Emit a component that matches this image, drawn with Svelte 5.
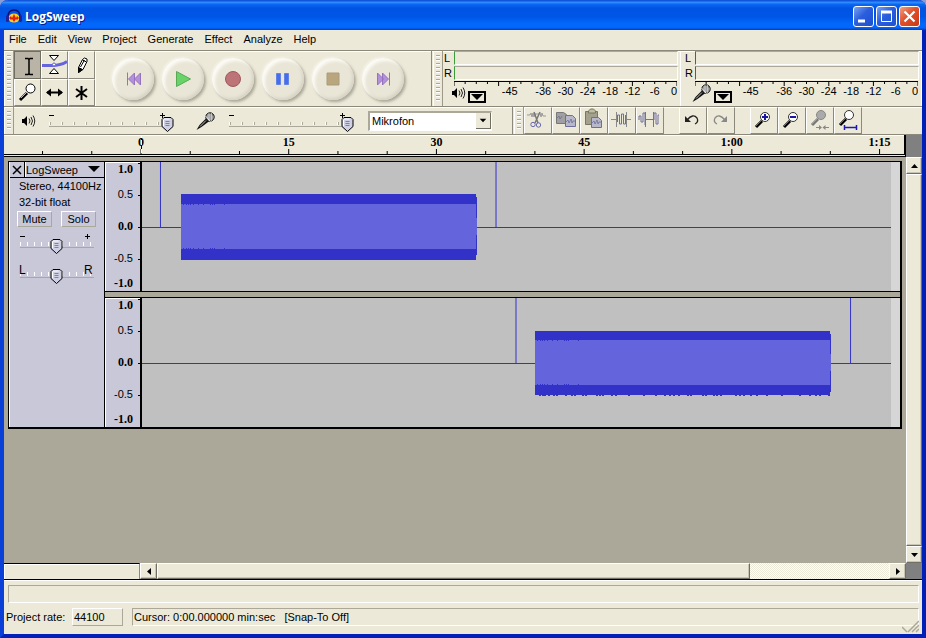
<script>
  const menus = ['File', 'Edit', 'View', 'Project', 'Generate', 'Effect', 'Analyze', 'Help'];
  const transport = [
    ['Skip to start', 'start'],
    ['Play', 'play'],
    ['Record', 'record'],
    ['Pause', 'pause'],
    ['Stop', 'stop'],
    ['Skip to end', 'end']
  ];
  const tools = ['select', 'envelope', 'draw', 'zoom', 'shift', 'multi'];
  const editGroups = [
    ['cut', 'copy', 'paste', 'trim', 'silence'],
    ['undo', 'redo'],
    ['zoomin', 'zoomout', 'fitsel', 'fitproj']
  ];
  const meterDb = [-45, -36, -30, -24, -18, -12, -6];
  const meterTicks = Array.from({ length: 21 }, (_, i) => i);
  const rulerMarks = Array.from({ length: 18 }, (_, i) => (i - 2) * 5);
  const secondPct = 1.313;
  const timeLabel = (s) => (s < 60 ? String(s) : `1:${String(s - 60).padStart(2, '0')}`);
  const vscale = [
    ['1.0', 10, true, 0],
    ['0.5', 35, false, 32],
    ['0.0', 67, true, 64],
    ['-0.5', 99, false, 96],
    ['-1.0', 124, true, 128]
  ];
  const channels = [
    { start: 39, top: 32, bottom: 98, innerTop: 42, innerBottom: 87, spikes: [18, 354], ragged: false },
    { start: 394, top: 33, bottom: 97, innerTop: 42, innerBottom: 87, spikes: [374, 709], ragged: true }
  ];
  const nicks = [2, 5, 7, 9, 12, 17, 22, 29, 31, 33, 43];
  const rag = [4, 7, 9, 13, 18, 21, 30, 36, 39, 47, 50, 61, 64, 67, 76, 80, 93, 108, 120, 129, 134, 138, 143, 152, 155, 167, 170, 178, 181, 185, 200, 204, 208, 215, 221, 231, 246, 264, 274, 280, 284, 293];
  let rate = $state('44100');
</script>

{#snippet thumb(x, y)}
  <g transform={`translate(${x} ${y})`}>
    <path d="M-3.500.5h7l2 2v7l-5.500 5-5.500-5v-7z" fill="#d0d0e4" stroke="#000" />
    <path d="M-4 9v-6l1-1h5" fill="none" stroke="#fff" />
    <path d="M-2 4.500h4M-2 6.500h4M-2 8.500h4" stroke="#8080b0" />
  </g>
{/snippet}

{#snippet speaker()}
  <svg width="15" height="14" viewBox="0 0 15 14">
    <path d="M1 5h2l3-3v10l-3-3h-2z" fill="#000" />
    <path d="M8 4.500q2 2.500 0 5M10 3q3 4 0 8M12 1.500q3.500 5.500 0 11" fill="none" stroke="#222" />
  </svg>
{/snippet}

{#snippet mic()}
  <svg class="mic" width="20" height="20" viewBox="0 0 20 20">
    <path d="M10.500 7l3 3-8 6-5 3 3-5z" fill="#111" />
    <path d="M10 9.500l-6 6" stroke="#bbb" />
    <circle cx="14" cy="6" r="4.200" fill="#888" stroke="#111" />
    <path d="M11 4h5M11 6h7M12 8h5M13 2v8M15.500 2v8" stroke="#ddd" stroke-width=".6" />
    <path d="M9.500 5l5 5.500" stroke="#eee" />
  </svg>
{/snippet}

{#snippet toolIcon(name)}
  <svg width="25" height="25" viewBox="0 0 25 25" fill="none" stroke="#000">
    {#if name === 'select'}
      <path d="M10 5.500h3l1 1 1-1h3M14 6v15M10 21.500h3l1-1 1 1h3" stroke-width="1.500" />
    {:else if name === 'envelope'}
      <path d="M0 12.500h10q9 0 15-4" stroke="#6464dc" stroke-width="3" />
      <path d="M7.500 2.500h9l-4.500 5zM7.500 20.500h9l-4.500-5z" fill="#fff" />
      <circle cx="12" cy="11.500" r="1.500" fill="#fff" stroke="#6464dc" />
    {:else if name === 'draw'}
      <path d="M9.500 14.500l4-8 2-1.500 2.500 1v2.500l-4 8-4.500 3z" fill="#fff" />
      <path d="M9.500 14.500l4 2-4 3z" fill="#000" />
      <path d="M13.500 7l4 2M11.500 14l4-7" />
    {:else if name === 'zoom'}
      <path d="M12 13l-7 7" stroke-width="3" />
      <path d="M12 12l-6 6" stroke="#bbb" />
      <circle cx="15.500" cy="8.500" r="4.500" fill="#fff" />
    {:else if name === 'shift'}
      <path d="M5 12.500h15" stroke-width="2" />
      <path d="M4 12.500l5-4v8zM21 12.500l-5-4v8z" fill="#000" stroke="none" />
    {:else}
      <path d="M12.500 6v14M7 9l11 8M7 17l11-8" stroke-width="2" />
    {/if}
  </svg>
{/snippet}

{#snippet lens(grey)}
  <path d="M11 13l-6 6" stroke={grey ? '#777' : '#000'} stroke-width="3" />
  <path d="M10 13l-5 5" stroke={grey ? '#aaa' : '#888'} stroke-width=".8" />
  <circle cx="14" cy="9" r="4.500" fill={grey ? '#aaa' : '#fff'} stroke={grey ? '#888' : '#333'} />
{/snippet}

{#snippet editIcon(name)}
  <svg width="25" height="25" viewBox="0 0 25 25" fill="none" stroke="#6e6e9e">
    {#if name === 'cut'}
      <path d="M1 8h3l1-2 1 4 1-4 1 4 1-3h4l1-1 1 4 1-4 1 3h3" stroke="#999" />
      <path d="M8 5l4 11M14 5l-5 11" stroke="#777" stroke-width="1.500" />
      <circle cx="7" cy="17.500" r="2.200" stroke="#6868b0" /><circle cx="12.500" cy="18" r="2.200" stroke="#6868b0" />
    {:else if name === 'copy'}
      <path d="M2.500 5.500h7l3 2v9h-10z" fill="#a0a0a0" stroke="#777" />
      <path d="M11.500 8.500h7l3 3v8h-10z" fill="#b8b8c8" />
      <path d="M12 15l2-2 1 3 2-4 1 4 1-2h2M3 11l2-2 1 3 2-3" stroke-width=".8" />
    {:else if name === 'paste'}
      <path d="M3.500 4.500h12v13h-12z" fill="#a3a18e" stroke="#777767" />
      <path d="M6.500 6v-2l2-2h3l2 2v2z" fill="#c0be9b" stroke="#777767" />
      <path d="M9.500 10.500h7l3 3v7h-10z" fill="#b8b8c8" />
      <path d="M10 16l2-2 1 3 2-4 1 4 1-2h2" stroke-width=".8" />
    {:else if name === 'trim'}
      <path d="M1 12.500h6M16 12.500h5M6.500 5v15M16.500 5v15" stroke="#888" />
      <path d="M7.500 15v-7h2v9h2v-10h2v10h2v-9" />
    {:else if name === 'silence'}
      <path d="M1 13v-4h2v6h2v-9h2v12M16 13v-7h2v11h2v-9h1" />
      <path d="M7 12.500h9M7.500 5v15M15.500 5v15" stroke="#777" />
    {:else if name === 'undo'}
      <path d="M6 13q6-7 10-2 2 4-2 6" stroke="#222" stroke-width="1.300" />
      <path d="M4 9v6h6z" fill="#222" stroke="none" />
    {:else if name === 'redo'}
      <path d="M16 13q-6-7-10-2-2 4 2 6" stroke="#888" stroke-width="1.300" />
      <path d="M18 9v6h-6z" fill="#888" stroke="none" />
    {:else if name === 'zoomin'}
      <g transform="translate(-1 1)">
        {@render lens(false)}
        <path d="M11 9h6M14 6v6" stroke="#1818a0" stroke-width="2" />
      </g>
    {:else if name === 'zoomout'}
      <g transform="translate(-1 1)">
        {@render lens(false)}
        <path d="M11 9h6" stroke="#1818a0" stroke-width="2" />
      </g>
    {:else if name === 'fitsel'}
      <g transform="translate(-1 -1)">{@render lens(true)}</g>
      <path d="M8 20.500h5M16 20.500h5" stroke="#888" />
      <path d="M11 18l3 2.500-3 2.500zM17.500 18l-3 2.500 3 2.500z" fill="#888" stroke="none" />
    {:else}
      <g transform="translate(-1 -1)">{@render lens(false)}</g>
      <path d="M8.500 18v5M20.500 18v5M9 20.500h11" stroke="#1818c0" stroke-width="1.500" />
    {/if}
  </svg>
{/snippet}

{#snippet levelSlider(label)}
  <div class="slider">
    <svg width="128" height="25" viewBox="0 0 128 25">
      <path d="M1 7.500h5M112 7.500h5M114.500 5v5" stroke="#000" />
      <path d="M1 18.500h119" stroke="#aca899" />
      {#each Array(10) as _, i}<path d={`M${1.5 + i * 12} 14v3`} stroke="#fff" /><path d={`M${2.5 + i * 12} 14v3`} stroke="#aca899" />{/each}
      {@render thumb(119.5, 9)}
    </svg>
    <input type="range" min="0" max="100" value="96" aria-label={label} />
  </div>
{/snippet}

{#snippet meter(kind)}
  <div class="meter">
    <div class="meter-row"><span>L</span><div class={['track-bar', kind]}></div></div>
    <div class="meter-row"><span>R</span><div class={['track-bar', kind]}></div></div>
    <div class="meter-scale">
      <svg width="100%" height="24">
        <path d="M0 0h2000" stroke="#000" stroke-width="2" />
        {#each meterTicks as i}
          <line x1={`${i * 5}%`} x2={`${i * 5}%`} y1="0" y2={i % 4 ? 3 : 5} stroke="#000" />
        {/each}
        {#each meterDb as db}
          <text x={`${((db + 60) / 60) * 100}%`} y="14" text-anchor="middle">{db}</text>
        {/each}
        <text x="100%" y="14" text-anchor="end">0</text>
      </svg>
      <div class="meter-tools">
        {#if kind === 'out'}{@render speaker()}{:else}{@render mic()}{/if}
        <button aria-label="Meter options"><svg width="18" height="12" viewBox="0 0 18 12"><rect x="1" y="1" width="16" height="10" fill="#ece9d8" stroke="#000" stroke-width="2" /><path d="M3 3h12l-6 6z" /></svg></button>
      </div>
    </div>
  </div>
{/snippet}

<div class="window">
  <header>
    <svg width="16" height="16" viewBox="0 0 16 16">
      <ellipse cx="8" cy="10" rx="5.500" ry="4.500" fill="#ffd21c" />
      <path d="M3 10l2-2 1 2 2-4 2 4 1-2 2 2-2 2-1-1-2 3-2-3-1 1z" fill="#e02010" />
      <path d="M2 9q0-7 6-7t6 7" fill="none" stroke="#10106e" stroke-width="1.500" />
      <rect x="0" y="7" width="3" height="7" rx="1.500" fill="#20209a" /><rect x="13" y="7" width="3" height="7" rx="1.500" fill="#20209a" />
    </svg>
    <h1>LogSweep</h1>
    <button aria-label="Minimize"><svg width="19" height="19" viewBox="0 0 19 19"><path d="M4 14h7" stroke="#fff" stroke-width="3" /></svg></button>
    <button aria-label="Maximize"><svg width="19" height="19" viewBox="0 0 19 19"><path d="M4.500 4v10.500h10V4" fill="none" stroke="#fff" /><path d="M4 5h11" stroke="#fff" stroke-width="3" /></svg></button>
    <button class="close" aria-label="Close"><svg width="19" height="19" viewBox="0 0 19 19"><path d="M4.500 4.500l10 10M14.500 4.500l-10 10" stroke="#fff" stroke-width="2.200" /></svg></button>
  </header>

  <nav>
    {#each menus as m}<button>{m}</button>{/each}
  </nav>

  <div class="bar top">
    <div class="grip"></div>
    <div class="tools">
      {#each tools as t}<button class:on={t === 'select'} aria-label={t}>{@render toolIcon(t)}</button>{/each}
    </div>
    <div class="transport">
      {#each transport as [label, id]}
        <button aria-label={label}>
          <svg width="20" height="20" viewBox="0 0 20 20">
            {#if id === 'start'}
              <path d="M4.500 3.500v13M11.500 4v12l-6-6zM17.500 4v12l-6-6z" fill="#b38fdc" stroke="#9674bd" />
            {:else if id === 'play'}
              <path d="M3.500 2.500l14 7.500-14 7.500z" fill="#68d468" stroke="#58a858" />
            {:else if id === 'record'}
              <circle cx="10" cy="10" r="7.500" fill="#bd7478" stroke="#a0585c" />
            {:else if id === 'pause'}
              <path d="M3.500 4.500h4v11h-4zM11.500 4.500h4v11h-4z" fill="#466cf0" stroke="#6484e4" />
            {:else if id === 'stop'}
              <path d="M4 4h12v12h-12z" fill="#b9a67e" stroke="#ac9c78" />
            {:else}
              <path d="M16.500 3.500v13M9.500 4v12l6-6zM4.500 4v12l6-6z" fill="#b38fdc" stroke="#9674bd" />
            {/if}
          </svg>
        </button>
      {/each}
    </div>
    <div class="grip"></div>
    <div class="meters">
      {@render meter('out')}
      {@render meter('in')}
    </div>
  </div>

  <div class="bar mixer">
    <div class="grip"></div>
    <div class="mix">
      {@render speaker()}
      {@render levelSlider('Output volume')}
      {@render mic()}
      {@render levelSlider('Input volume')}
      <div class="combo">
        <select aria-label="Input source"><option>Mikrofon</option></select>
        <svg width="15" height="16" viewBox="0 0 15 16"><path d="M4 6h7l-3.500 4z" /></svg>
      </div>
    </div>
    <div class="grip"></div>
    <div class="edit">
      {#each editGroups as g}
        <div>{#each g as e}<button aria-label={e}>{@render editIcon(e)}</button>{/each}</div>
      {/each}
    </div>
  </div>

  <div class="ruler-row">
    <div class="ruler">
      <svg width="100%" height="19">
        {#each rulerMarks as s}
          <line x1={`${s * secondPct}%`} x2={`${s * secondPct}%`} y1={s % 15 || s < 0 ? 16 : 14} y2="19" stroke="#000" />
          {#if s % 15 === 0 && s >= 0}<text x={`${s * secondPct}%`} y="11" text-anchor="middle">{timeLabel(s)}</text>{/if}
        {/each}
        <path d="M.5 1v17" stroke="#fff" />
        <path d="M.5 3v2M.5 10v4" stroke="#000" />
      </svg>
    </div>
    <div class="dark"></div>
  </div>

  <main>
    <div class="canvas">
      <section class="track">
        <aside>
          <div class="track-title">
            <button aria-label="Close track"><svg width="14" height="14" viewBox="0 0 14 14"><path d="M3 3l8 8M11 3l-8 8" stroke="#000" stroke-width="1.500" /></svg></button>
            <button class="name">LogSweep<svg width="12" height="7" viewBox="0 0 12 7"><path d="M0 0h12l-6 6z" /></svg></button>
          </div>
          <div class="info">Stereo, 44100Hz<br />32-bit float</div>
          <div class="ms"><button>Mute</button><button>Solo</button></div>
          {#each ['Gain', 'Pan'] as kind}
            <div class="slider">
              <svg width="80" height="30" viewBox="0 0 80 30">
                <path d="M1 20.500h74" stroke="#aca899" />
                {#each Array(11) as _, i}<path d={`M${1.5 + i * 7} 15v4`} stroke="#fff" />{/each}
                {#if kind === 'Gain'}
                  <path d="M1 9.500h5M66 9.500h5M68.500 7v5" stroke="#000" />
                {:else}
                  <text x="0" y="17" class="lr">L</text><text x="65" y="17" class="lr">R</text>
                {/if}
                {@render thumb(37.5, 12)}
              </svg>
              <input type="range" min="-100" max="100" value="0" aria-label={kind} />
            </div>
          {/each}
        </aside>
        <div class="channels">
          {#each channels as c}
            <div class="channel">
              <svg class="vscale" width="35" height="129">
                {#each vscale as [label, y, bold, tick]}
                  <text x="27" {y} text-anchor="end" class:bold>{label}</text>
                  <path d={`M32 ${tick + 0.5}h3`} stroke="#000" />
                {/each}
              </svg>
              <svg class="wave" viewBox="0 0 750 129" preserveAspectRatio="none" shape-rendering="crispEdges">
                <path d="M0 65.500h750" stroke="#3232c8" />
                {#each c.spikes as x}<path d={`M${x + 0.5} 0v66`} stroke="#3232c8" />{/each}
                <rect x={c.start} y={c.top} width="295" height={c.bottom - c.top} fill="#3232c8" />
                <rect x={c.start + 295} y={c.top + 3} width="1" height="58" fill="#3232c8" />
                <rect x={c.start} y={c.innerTop} width="295" height={c.innerBottom - c.innerTop} fill="#6464dc" />
                <rect x={c.start + 295} y="56" width="1" height="17" fill="#6464dc" />
                {#each nicks as n}
                  <rect x={c.start + n} y={c.innerTop} width="1" height="1" fill="#3232c8" />
                  <rect x={c.start + n} y={c.innerBottom - 1} width="1" height="1" fill="#3232c8" />
                {/each}
                {#if c.ragged}
                  {#each rag as n}<rect x={c.start + n} y={c.bottom} width="2" height="1" fill="#3232c8" />{/each}
                {/if}
              </svg>
              <div class="tail"></div>
            </div>
          {/each}
        </div>
      </section>
    </div>
    <div class="vscroll">
      <button aria-label="Scroll up"><svg width="7" height="4" viewBox="0 0 7 4"><path d="M0 4h7l-3.500-4z" /></svg></button>
      <div class="vthumb"></div>
      <button aria-label="Scroll down"><svg width="7" height="4" viewBox="0 0 7 4"><path d="M0 0h7l-3.500 4z" /></svg></button>
    </div>
  </main>

  <div class="hrow">
    <div class="blank"></div>
    <button aria-label="Scroll left"><svg width="4" height="7" viewBox="0 0 4 7"><path d="M4 0v7l-4-3.500z" /></svg></button>
    <div class="trough"><div class="hthumb"></div></div>
    <button aria-label="Scroll right"><svg width="4" height="7" viewBox="0 0 4 7"><path d="M0 0v7l4-3.500z" /></svg></button>
    <div class="dark"></div>
  </div>

  <footer>
    <div class="panel"></div>
    <div class="status">
      <label for="rate">Project rate:</label>
      <input id="rate" type="text" bind:value={rate} />
      <div class="panel">Cursor: 0:00.000000 min:sec &nbsp; [Snap-To Off]</div>
    </div>
    <svg class="resize" width="17" height="13" viewBox="0 0 17 13"><path d="M0 7l5 5M6 12l11-11M10 12l7-7M14 12l3-3" stroke="#aca899" stroke-width="1.500" /></svg>
  </footer>
</div>

<style>
  :global(body) { margin: 0; background: #8c9cd8; }
  .window, .window * { box-sizing: border-box; }
  .window {
    min-height: 100vh;
    display: flex;
    flex-direction: column;
    font: 11px/14px "Liberation Sans", Arial, sans-serif;
    color: #000;
    background: #ece9d8;
    border: 4px solid #0845dc;
    border-color: #0845dc #0020b8 #0020b8 #0a3fd8;
    border-top: 0;
    border-radius: 8px 8px 0 0;
  }
  button { font: inherit; color: inherit; padding: 0; margin: 0; border: 0; background: none; display: flex; align-items: center; justify-content: center; }
  svg { display: block; flex: none; }
  header {
    height: 30px;
    margin: 0 -4px;
    padding: 2px 6px 0 6px;
    display: flex;
    align-items: center;
    gap: 2px;
    border-radius: 8px 8px 0 0;
    background: linear-gradient(#0846d0 0, #2d8cff 8%, #0a66f0 15%, #0054e3 28%, #0055e6 55%, #0268fc 80%, #0266fa 92%, #003cc8 100%);
  }
  h1 { flex: 1; margin: 2px 0 0 1px; font: bold 12px/18px "Open Sans", sans-serif; color: #fff; text-shadow: 1px 1px #0a1883; }
  header button { width: 21px; height: 21px; border: 1px solid #fff; border-radius: 3px; background: linear-gradient(135deg, #7ba2f0, #2a5ede 45%, #1e50d0); }
  header .close { background: linear-gradient(135deg, #f0a080, #e0502c 45%, #c83a14); }
  nav { display: flex; height: 20px; padding-bottom: 2px; }
  nav button { padding: 0 6px 0 5px; }
  .bar { display: flex; border-top: 1px solid #8c897c; }
  .top { height: 56px; box-shadow: inset 0 1px #fff; }
  .mixer { height: 28px; box-shadow: inset 0 1px #fff; }
  .grip { width: 10px; flex: none; border-right: 1px solid #9c998b; padding: 4px 2px; border-left: 1px solid #fff; }
  .grip::before { content: ""; display: block; height: 100%; width: 4px; background: repeating-linear-gradient(#aca899 0 1px, #fff 1px 2px, transparent 2px 4px); }
  .tools { width: 81px; display: grid; grid-template-columns: repeat(3, 27px); grid-template-rows: 28px 27px; }
  .tools button, .edit button { border: 1px solid #fff; border-right-color: #8c897c; border-bottom-color: #8c897c; }
  .edit button { padding-bottom: 2px; }
  .tools .on { background: #b9b4a5; border: 1px solid #716f64; }
  .transport { width: 337px; display: flex; align-items: center; padding-left: 16px; gap: 8px; border-right: 1px solid #8c897c; margin-right: 1px; border-left: 1px solid #fff; }
  .transport button {
    width: 42px; height: 42px; border-radius: 50%;
    background: #e9e6d7;
    box-shadow: inset 3px 3px 3px #fbfaf4, inset -2px -2px 3px #d8d4c5, 2px 2px 3px #aaa798, -1px -1px 2px #f6f4ea;
  }
  .meters { flex: 1; display: flex; gap: 3px; }
  .meter { flex: 1; padding: 0 3px 0 1px; border-right: 1px solid #fff; }
  .meter-row { display: flex; height: 14px; }
  .meter-row + .meter-row { margin-top: 1px; }
  .meter-row span { width: 10px; }
  .track-bar { flex: 1; border: 1px solid #fff; border-top-color: #aca899; margin-right: -1px; }
  .track-bar.out { border-left-color: #3c9c3c; }
  .track-bar.in { border-left-color: #a83c3c; }
  .meter-scale { margin: 1px 0 0 10px; }
  svg text { font: 11px "Liberation Sans", Arial, sans-serif; }
  .meter-tools { display: flex; gap: 2px; align-items: center; height: 20px; margin: -22px 0 0 -3px; position: relative; }
  .meter-tools button { padding-top: 8px; }
  .mix { width: 499px; display: flex; align-items: center; padding-left: 7px; border-right: 1px solid #8c897c; margin-right: 1px; gap: 12px; }
  .mix .mic { margin-left: 8px; }
  .slider { position: relative; }
  .slider input { position: absolute; inset: 0; width: 100%; height: 100%; margin: 0; opacity: 0; }
  .combo { position: relative; width: 124px; }
  .combo select { display: block; appearance: none; width: 100%; height: 20px; border: 2px solid #aca899; border-right: 1px solid #fff; border-bottom: 1px solid #fff; border-radius: 0; background: #fff; padding: 0 2px; font: inherit; color: #000; }
  .combo svg { position: absolute; right: 1px; top: 2px; background: #ece9d8; border-right: 1px solid #716f64; border-bottom: 1px solid #716f64; pointer-events: none; }
  .edit { display: flex; gap: 15px; }
  .edit div { display: flex; }
  .edit button { width: 28px; }
  .ruler-row { display: flex; border-top: 1px solid #8c897c; }
  .ruler { flex: 1; padding: 0 15px 0 137px; border-bottom: 3px double #000; border-right: 2px solid #000; box-shadow: inset 0 1px #fff; }
  .ruler svg { overflow: visible; width: calc(100% + 2px); }
  .ruler text { font: bold 12px "Liberation Serif", serif; }
  .dark { width: 16px; flex: none; background: #808080; }
  main { flex: 1; display: flex; background: #aca899; }
  .canvas { flex: 1; min-width: 0; padding: 4px 4px 0; }
  .track { display: flex; border: 1px solid #000; border-right-width: 2px; border-bottom-width: 2px; }
  aside { width: 96px; flex: none; background: #c8c8d8; border-right: 1px solid #000; border-left: 1px solid #fff; }
  .track-title { display: flex; height: 16px; border-bottom: 1px solid #000; }
  .track-title button { width: 15px; border-right: 1px solid #000; }
  .track-title .name { flex: 1; border: 0; border-left: 1px solid #fff; justify-content: space-between; padding: 0 4px 0 0; }
  .info { padding: 0 0 0 9px; line-height: 16px; white-space: nowrap; }
  .ms { display: flex; gap: 9px; padding: 1px 0 0 7px; }
  .ms button { width: 35px; height: 16px; border: 1px solid #fff; border-right-color: #aca899; border-bottom-color: #aca899; }
  aside .slider { margin-left: 9px; width: 80px; }
  .slider .lr { font-size: 12px; }
  .channels { flex: 1; min-width: 0; display: flex; flex-direction: column; gap: 5px; background: #aca899; }
  .channel { display: flex; height: 130px; }
  .channel + .channel { border-top: 1px solid #000; }
  .channel:first-child { border-bottom: 1px solid #000; }
  .vscale { background: #c8c8d8; border-left: 1px solid #fff; border-top: 1px solid #fff; }
  .vscale .bold { font: bold 12px "Liberation Serif", serif; }
  .wave { flex: 1; min-width: 0; height: 129px; background: #c0c0c0; border-left: 2px solid #000; }
  .tail { width: 9px; flex: none; background: #d6d6d6; }
  .vscroll { width: 16px; flex: none; display: flex; flex-direction: column; }
  .vscroll button, .hrow button, .vthumb, .hthumb { background: #ece9d8; border: 1px solid #fff; border-right: 1px solid #716f64; border-bottom: 1px solid #716f64; box-shadow: inset -1px -1px #c8c5b5; }
  .vscroll button { height: 17px; }
  .vthumb { flex: 1; }
  .hrow { display: flex; height: 17px; border-bottom: 1px solid #000; }
  .hrow button { width: 17px; }
  .blank { width: 136px; border-top: 1px solid #000; border-right: 1px solid #8c897c; box-shadow: inset 1px 1px #fff; }
  .trough { flex: 1; background: repeating-conic-gradient(#fff 0 25%, #ece9d8 0 50%) 0 0 / 2px 2px; }
  .hthumb { width: 81%; height: 16px; }
  footer { height: 54px; position: relative; padding: 5px 3px 0 4px; box-shadow: inset 0 1px #fff; }
  .panel { height: 18px; border: 1px solid #aca899; border-right-color: #fff; border-bottom-color: #fff; }
  .status { display: flex; margin: 5px 0 0 -2px; line-height: 18px; }
  .status label { width: 66px; }
  .status input { width: 51px; height: 18px; padding: 0 1px; border: 1px solid #fff; border-right-color: #aca899; border-bottom-color: #aca899; background: #ece9d8; font: inherit; margin-right: 9px; border-radius: 0; }
  .status .panel { flex: 1; padding-left: 1px; line-height: 16px; }
  .resize { position: absolute; right: 3px; bottom: 1px; }
</style>
